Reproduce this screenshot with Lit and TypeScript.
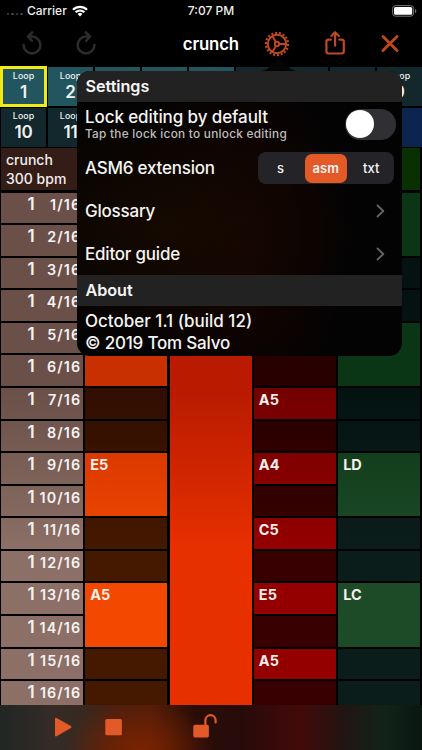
import { LitElement, html, css, svg, nothing } from "lit";
import { customElement, property } from "lit/decorators.js";

type RGB = [number, number, number];
interface Note { row: number; span: number; label: string }
interface Track {
  dim: RGB; lit: RGB;
  emptyDim: RGB; emptyLit: RGB;
  head: string;
  notes: Note[];
}

const ROWS = 16;
const PITCH = 32.58;
const GRID_TOP = 192.7;

const TRACKS: Track[] = [
  { dim: [201, 48, 0], lit: [243, 72, 0], emptyDim: [49, 14, 0], emptyLit: [69, 24, 0], head: "#3a1a05",
    notes: [{ row: 5, span: 2, label: "" }, { row: 9, span: 2, label: "E5" }, { row: 13, span: 2, label: "A5" }] },
  { dim: [186, 27, 0], lit: [230, 48, 0], emptyDim: [49, 8, 0], emptyLit: [60, 10, 0], head: "#381005",
    notes: [{ row: 1, span: 16, label: "" }] },
  { dim: [116, 0, 0], lit: [148, 0, 0], emptyDim: [41, 0, 0], emptyLit: [56, 0, 0], head: "#330000",
    notes: [{ row: 7, span: 1, label: "A5" }, { row: 9, span: 1, label: "A4" }, { row: 11, span: 1, label: "C5" },
      { row: 13, span: 1, label: "E5" }, { row: 15, span: 1, label: "A5" }] },
  { dim: [11, 54, 22], lit: [29, 74, 39], emptyDim: [4, 19, 17], emptyLit: [11, 29, 27], head: "#083000",
    notes: [{ row: 1, span: 2, label: "" }, { row: 5, span: 2, label: "" }, { row: 9, span: 2, label: "LD" }, { row: 13, span: 2, label: "LC" }] },
];

const shade = (a: RGB, b: RGB, y: number) => {
  const t = Math.min(1, Math.max(0, (y - 395) / 155));
  return `rgb(${a.map((v, i) => Math.round(v + (b[i] - v) * t)).join(",")})`;
};
const fill = (a: RGB, b: RGB, row: number, span = 1) => {
  const y0 = GRID_TOP + (row - 1) * PITCH;
  const y1 = y0 + span * PITCH;
  if (span < 3) return `linear-gradient(${shade(a, b, y0)},${shade(a, b, y1)})`;
  const h = y1 - y0;
  return `linear-gradient(${shade(a, b, y0)} ${((395 - y0) / h) * 100}%,${shade(a, b, y1)} ${((550 - y0) / h) * 100}%)`;
};

@customElement("status-bar")
class StatusBar extends LitElement {
  static styles = css`
    :host { display: grid; grid-template-columns: 1fr auto 1fr; height: 21px; align-items: center; font-size: 12px; font-weight: 500; color: #eee; }
    .left { display: flex; align-items: center; padding-left: 6.5px; }
    .dots { display: flex; gap: 2px; margin: 7px 4px 0 0; }
    .dots i { width: 2.6px; height: 2.6px; border-radius: 50%; background: #454545; }
    .wifi { margin-left: 5px; }
    .right { display: flex; justify-content: flex-end; padding-right: 5px; }
    svg { display: block; }
  `;
  render() {
    return html`
      <div class="left"><span class="dots"><i></i><i></i><i></i><i></i></span><span>Carrier</span>
        <svg class="wifi" width="16" height="12" viewBox="0 0 16 12" fill="none" stroke="#fff" stroke-width="2.1">
          <path d="M1 4.7a10 10 0 0 1 14 0M3.6 7.3a6.2 6.2 0 0 1 8.8 0"/><path d="M8 11.5 5.6 9a3.4 3.4 0 0 1 4.8 0z" fill="#fff" stroke="none"/>
        </svg></div>
      <div class="clock">7:07 PM</div>
      <div class="right"><svg width="25" height="12" viewBox="0 0 25 12">
        <rect x=".6" y=".6" width="21" height="10.6" rx="3" fill="none" stroke="#777" stroke-width="1"/>
        <rect x="2" y="2" width="18.2" height="7.8" rx="1.6" fill="#fff"/><path d="M23 4v4q1.4-.5 1.4-2T23 4z" fill="#777"/></svg></div>`;
  }
}

@customElement("nav-bar")
class NavBar extends LitElement {
  static styles = css`
    :host { display: grid; grid-template-columns: 22px 32px 22px 1fr 26px 34px 22px 34px 20px; height: 46px; align-items: center;
      padding: 0 22px 0 21px; box-sizing: border-box; }
    .title { grid-column: 4; justify-self: end; margin-right: 25px; font-size: 16.8px; font-weight: 600; color: #fff; letter-spacing: -.15px; }
    .redo { grid-column: 3; }
    .share { grid-column: 7; margin-top: -3px; }
    .close { grid-column: 9; }
    svg { display: block; fill: none; stroke: #c04820; stroke-linecap: round; stroke-linejoin: round; }
    .off { stroke: #2c2c2c; stroke-width: 2.5; margin-top: -3px; }
  `;
  render() {
    const arrow = svg`<path d="M2.6 14A8.4 8.4 0 1 0 11 5.600H7.400M11.200 1.400 7 5.400l3.800 4.400"/>`;
    const spokes = [0, 120, 240].map((a) => svg`<path d="M15.6 13H22" transform="rotate(${a} 13 13)"/>`);
    return html`
      <svg class="off" width="22" height="24" viewBox="0 0 22 24">${arrow}</svg>
      <svg class="off redo" width="22" height="24" viewBox="0 0 22 24"><g transform="matrix(-1 0 0 1 22 0)">${arrow}</g></svg>
      <span class="title">crunch</span>
      <svg width="26" height="26" viewBox="0 0 26 26" stroke-width="1.9">
        <circle cx="13" cy="13" r="9.2"/><circle cx="13" cy="13" r="2.2"/>${spokes}
        <circle cx="13" cy="13" r="11.1" pathLength="36" stroke-width="2.2" stroke-dasharray="1.05 .95" stroke-linecap="butt"/></svg>
      <svg class="share" width="22" height="26" viewBox="0 0 22 26" stroke-width="2.2">
        <path d="M6.8 9.700H4.6Q2.4 9.700 2.4 11.900v9.400Q2.4 23.500 4.6 23.500h13q2.2 0 2.2-2.200v-9.400q0-2.200-2.200-2.200h-2.2M11.1 15.700V2.500M7.4 6l3.7-3.8L14.8 6"/></svg>
      <svg class="close" width="20" height="20" viewBox="0 0 20 20" stroke-width="2.9"><path d="m3 2.500 14 14M17 2.500 3 16.500"/></svg>`;
  }
}

@customElement("loop-cell")
class LoopCell extends LitElement {
  @property({ type: Number }) n = 0;
  static styles = css`
    :host { display: flex; flex-direction: column; align-items: center; color: #f2f2f2; overflow: hidden; }
    .word { font-size: 8.8px; line-height: 11px; margin-top: 2.5px; font-weight: 500; letter-spacing: .1px; }
    .num { font-size: 17px; line-height: 20px; margin-top: 1px; font-weight: 600; }
  `;
  render() { return this.n ? html`<span class="word">Loop</span><span class="num">${this.n}</span>` : nothing; }
}

@customElement("note-grid")
class NoteGrid extends LitElement {
  static styles = css`
    :host { display: grid; grid-template-columns: repeat(5, 82.2px); column-gap: 2.1px; padding-left: 1px; height: 557.4px; overflow: hidden; }
    .col { display: grid; grid-template-rows: 42.5px repeat(16, 30.58px); row-gap: 2px; }
    .head { background: #351d17; color: #f2eeee; font-size: 14px; font-weight: 500; padding: 2px 0 0 5px; line-height: 19px; height: 42px; box-sizing: border-box; white-space: nowrap; }
    .step { display: flex; justify-content: flex-end; align-items: baseline; height: 30.58px; box-sizing: border-box; padding: 0 2px 0 0; color: #f7f3f2; }
    .bar { font-size: 17px; font-weight: 600; line-height: 23px; }
    .frac { font-size: 14.3px; font-weight: 600; width: 46.5px; text-align: right; letter-spacing: 1.1px; }
    .note { color: #f7efec; font-size: 14.5px; font-weight: 700; line-height: 18px; padding: 3px 0 0 5px; }
  `;
  render() {
    const rows = Array.from({ length: ROWS }, (_, i) => i + 1);
    return html`
      <div class="col"><div class="head">crunch<br>300 bpm</div>
        ${rows.map((r) => html`<div class="step" style="background:${fill([107, 80, 73], [140, 112, 103], r)}">
          <span class="bar">1</span><span class="frac">${r}/16</span></div>`)}
      </div>
      ${TRACKS.map((t) => html`<div class="col"><div class="head" style="background:${t.head}"></div>
        ${rows.map((r) => {
          const note = t.notes.find((n) => r >= n.row && r < n.row + n.span);
          if (!note) return html`<div style="background:${fill(t.emptyDim, t.emptyLit, r)}"></div>`;
          if (note.row !== r) return null;
          return html`<div class="note" style="grid-row:span ${note.span};background:${fill(t.dim, t.lit, r, note.span)}">${note.label}</div>`;
        })}</div>`)}`;
  }
}

@customElement("settings-popover")
class SettingsPopover extends LitElement {
  static styles = css`
    :host { display: block; width: 325px; height: 285px; border-radius: 13px; color: #f5f5f5; font-size: 17px; font-weight: 500;
      background: radial-gradient(ellipse 190px 130px at 27% 55%, #150900, transparent), radial-gradient(ellipse 110px 190px at 50% 60%, #160300, transparent), #030303; }
    .arrow { position: absolute; left: 183px; top: -12px; }
    .body { border-radius: 13px; overflow: hidden; height: 285px; }
    .section { background: #222; height: 30.5px; line-height: 30px; padding-left: 8.5px; font-weight: 600; font-size: 16.2px; letter-spacing: -.05px; }
    .row { display: flex; align-items: center; justify-content: space-between; padding: 0 8px 0 8px; white-space: nowrap; letter-spacing: -.22px; }
    .lock { height: 43.5px; padding: 1px 6px 0 8px; letter-spacing: -.1px; }
    .ext { height: 43px; }
    .link { height: 43.2px; padding-right: 17px; }
    .name { line-height: 20px; margin-top: -1px; }
    .hint { font-size: 11.8px; line-height: 14px; color: #bdbdbd; font-weight: 500; letter-spacing: .27px; }
    .toggle { width: 51.5px; height: 31.5px; border-radius: 16px; background: #303034; padding: 1.8px; box-sizing: border-box; }
    .knob { width: 28px; height: 28px; border-radius: 50%; background: #fff; }
    .seg { width: 136px; height: 32px; border-radius: 8px; background: #242428; display: grid; grid-template-columns: 41px 41.5px 1fr; column-gap: 2px;
      padding: 1.5px 0 1.5px 4px; margin-top: 1px; box-sizing: border-box; font-size: 13px; text-align: center; line-height: 29px; letter-spacing: 0; }
    .seg .s { padding-right: 4px; }
    .seg .on { background: #e45a26; border-radius: 7px; font-weight: 600; }
    .lines { padding: 4px 0 0 8px; line-height: 22px; }
    .copy { letter-spacing: -.2px; }
    svg { display: block; }
  `;
  render() {
    const chevron = html`<svg width="9" height="14" viewBox="0 0 9 14" fill="none" stroke="#626262" stroke-width="1.9" stroke-linecap="round" stroke-linejoin="round"><path d="m1.5 1.5 5.8 5.5-5.8 5.5"/></svg>`;
    return html`
      <svg class="arrow" width="38" height="12" viewBox="0 0 38 12"><path d="M0 12C7 12 9 8 12 5q7-7 14 0c3 3 5 7 12 7z" fill="#050505"/></svg>
      <div class="body">
        <div class="section">Settings</div>
        <div class="row lock"><div><div class="name">Lock editing by default</div><div class="hint">Tap the lock icon to unlock editing</div></div>
          <div class="toggle"><div class="knob"></div></div></div>
        <div class="row ext"><span>ASM6 extension</span><div class="seg"><span class="s">s</span><span class="on">asm</span><span>txt</span></div></div>
        <div class="row link"><span>Glossary</span>${chevron}</div>
        <div class="row link"><span>Editor guide</span>${chevron}</div>
        <div class="section">About</div>
        <div class="lines">October 1.1 (build 12)<br><span class="copy">© 2019 Tom Salvo</span></div>
      </div>`;
  }
}

@customElement("play-bar")
class PlayBar extends LitElement {
  static styles = css`
    :host { display: flex; align-items: flex-start; height: 45px; box-sizing: border-box; padding: 11px 0 0 54px;
      background: radial-gradient(ellipse 75px 50px at 140px 45px, #7a2300, transparent),
        linear-gradient(90deg, #222624 0, #342b27 50px, #382920 80px, #4a1f10 115px, #531c08 150px, #2a0d07 195px, #260b0a 240px, #430909 300px, #201512 345px, #11241a 385px, #091610 422px); }
    svg { display: block; fill: #e25a28; }
    .stop { margin-left: 32px; }
    .lock { margin: -3px 0 0 70px; }
  `;
  render() {
    return html`
      <svg width="19" height="22" viewBox="0 0 19 22"><path d="M1 3q0-1.8 1.6-.9L16.9 10q1.5 1 0 2L2.6 20.2Q1 21 1 19.300z"/></svg>
      <svg class="stop" width="18" height="22" viewBox="0 0 18 22"><rect x=".3" y="3" width="16.600" height="16.300" rx="1.500"/></svg>
      <svg class="lock" width="26" height="26" viewBox="0 0 26 26"><rect x=".3" y="11.800" width="15.600" height="12.600" rx="1.600"/>
        <path d="M12.400 12V7.300a5.100 5.100 0 0 1 10.200 0V9.500" fill="none" stroke="#e25a28" stroke-width="2.200" stroke-linecap="round"/></svg>`;
  }
}

@customElement("app-root")
class AppRoot extends LitElement {
  static styles = css`
    :host { display: flex; flex-direction: column; position: relative; width: 422px; height: 750px; overflow: hidden; background: #000;
      font-family: Inter, "Liberation Sans", sans-serif; }
    .loops { display: grid; grid-template-columns: repeat(9, 45.2px); column-gap: 1.8px; row-gap: 1.8px; grid-auto-rows: 38.9px; padding-left: 1px; height: 81px; }
    .near { background: #22555e; }
    .far { background: #13282c; }
    .blue { background: #0b2450; }
    .current { outline: 3px solid #f2ea13; outline-offset: -2.2px; }
    note-grid { flex: 0 0 auto; }
    play-bar { position: absolute; left: 0; right: 0; bottom: 0; }
    settings-popover { position: absolute; left: 77px; top: 71px; }
  `;
  render() {
    const loops = Array.from({ length: 18 }, (_, i) => i + 1);
    const named = new Set([1, 2, 9, 10, 11]);
    const tone = (n: number) => (n === 1 ? "near current" : n < 6 ? "near" : n > 11 ? "blue" : "far");
    return html`
      <status-bar></status-bar>
      <nav-bar></nav-bar>
      <div class="loops">${loops.map((n) => html`<loop-cell class=${tone(n)} .n=${named.has(n) ? n : 0}></loop-cell>`)}</div>
      <note-grid></note-grid>
      <play-bar></play-bar>
      <settings-popover></settings-popover>`;
  }
}
